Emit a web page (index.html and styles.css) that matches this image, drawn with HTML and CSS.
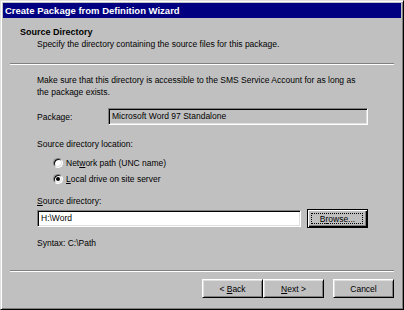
FILE: index.html
```html
<!DOCTYPE html>
<html lang="en">
<head>
  <meta charset="UTF-8" />
  <title>Create Package from Definition Wizard</title>
  <link rel="stylesheet" href="styles.css">
</head>
<body>
  <div class="window">
    <div class="titlebar">Create Package from Definition Wizard</div>

    <div class="header">
      <div class="heading">Source Directory</div>
      <div class="subheading">Specify the directory containing the source files for this package.</div>
    </div>
    <div class="sep"></div>

    <div class="content">
      <p class="intro">Make sure that this directory is accessible to the SMS Service Account for as long as<br>the package exists.</p>

      <div class="package-row">
        <span class="label">Package:</span>
        <div class="field readonly">Microsoft Word 97 Standalone</div>
      </div>

      <div class="group-label">Source directory location:</div>
      <div class="radios">
        <div class="radio"><span class="dot"></span>Net<u>w</u>ork path (UNC name)</div>
        <div class="radio checked"><span class="dot"></span><u>L</u>ocal drive on site server</div>
      </div>

      <div class="source-label"><u>S</u>ource directory:</div>
      <div class="input-row">
        <div class="field input">H:\Word</div>
        <button class="btn default">B<u>r</u>owse...</button>
      </div>

      <div class="syntax">Syntax: C:\Path</div>
    </div>

    <div class="sep bottom"></div>
    <div class="buttons">
      <button class="btn">&lt; <u>B</u>ack</button>
      <button class="btn"><u>N</u>ext &gt;</button>
      <button class="btn cancel">Cancel</button>
    </div>
  </div>
</body>
</html>
```

FILE: styles.css
```css
body {
  margin: 0;
  background-color: #c0c0c0;
  font-family: "Liberation Sans", Arial, sans-serif;
  font-size: 8.5px;
  color: #000;
}
.window {
  width: 404px;
  height: 310px;
  box-sizing: border-box;
  border: 1px solid;
  border-color: #dfdfdf #000 #000 #dfdfdf;
  box-shadow: inset 1px 1px #fff, inset -1px -1px #808080;
  padding: 2px;
  display: flex;
  flex-direction: column;
}
.titlebar {
  height: 15px;
  line-height: 15px;
  padding-left: 2px;
  background-color: #000080;
  color: #fff;
  font-weight: bold;
  font-size: 9.5px;
}
.header {
  padding: 9px 0 0 17px;
}
.heading {
  font-weight: bold;
  font-size: 9px;
  line-height: 11px;
}
.subheading {
  padding-left: 17px;
  line-height: 12px;
}
.sep {
  margin: 13px 7px 0;
  border-top: 1px solid #808080;
  border-bottom: 1px solid #fff;
}
.sep.bottom {
  margin-top: 21px;
}
.content {
  padding: 9px 0 0 34px;
}
.intro {
  margin: 0;
  line-height: 12px;
}
.package-row {
  display: flex;
  align-items: center;
  margin-top: 10px;
}
.package-row .label {
  width: 71px;
}
.field {
  height: 17px;
  box-sizing: border-box;
  border: 1px solid;
  border-color: #808080 #fff #fff #808080;
  box-shadow: inset 1px 1px #000, inset -1px -1px #dfdfdf;
  padding-left: 3px;
  line-height: 15px;
}
.field.readonly {
  width: 260px;
}
.field.input {
  width: 264px;
  background-color: #fff;
}
.group-label {
  margin-top: 13px;
  line-height: 12px;
}
.radios {
  margin-top: 5px;
  padding-left: 16px;
}
.radio {
  display: flex;
  align-items: center;
  height: 16px;
}
.dot {
  width: 10px;
  height: 10px;
  box-sizing: border-box;
  margin-right: 3px;
  border-radius: 50%;
  border: 1px solid;
  border-color: #808080 #fff #fff #808080;
  box-shadow: inset 1px 1px #000, inset -1px -1px #dfdfdf;
  background-color: #fff;
  display: flex;
  align-items: center;
  justify-content: center;
}
.radio.checked .dot::after {
  content: "";
  width: 4px;
  height: 4px;
  border-radius: 50%;
  background-color: #000;
}
.source-label {
  margin-top: 8px;
  line-height: 12px;
}
.input-row {
  display: flex;
  align-items: center;
  margin-top: 2px;
  height: 19px;
}
.btn {
  width: 61px;
  height: 19px;
  padding: 0;
  box-sizing: border-box;
  background-color: #c0c0c0;
  border: 1px solid;
  border-color: #fff #000 #000 #fff;
  box-shadow: inset 1px 1px #dfdfdf, inset -1px -1px #808080;
  font-family: "Liberation Sans", Arial, sans-serif;
  font-size: 8.5px;
  color: #000;
  position: relative;
}
.btn.default {
  margin-left: 6px;
  border-color: #000;
  box-shadow: inset 1px 1px #fff, inset -1px -1px #000, inset -2px -2px #808080;
}
.btn.default::before {
  content: "";
  position: absolute;
  inset: 3px 4px 3px 3px;
  border: 1px dotted #000;
}
.syntax {
  margin-top: 9px;
  line-height: 12px;
}
.buttons {
  display: flex;
  justify-content: flex-end;
  margin-top: 7px;
  padding-right: 7px;
}
.btn.cancel {
  margin-left: 9px;
}
```
